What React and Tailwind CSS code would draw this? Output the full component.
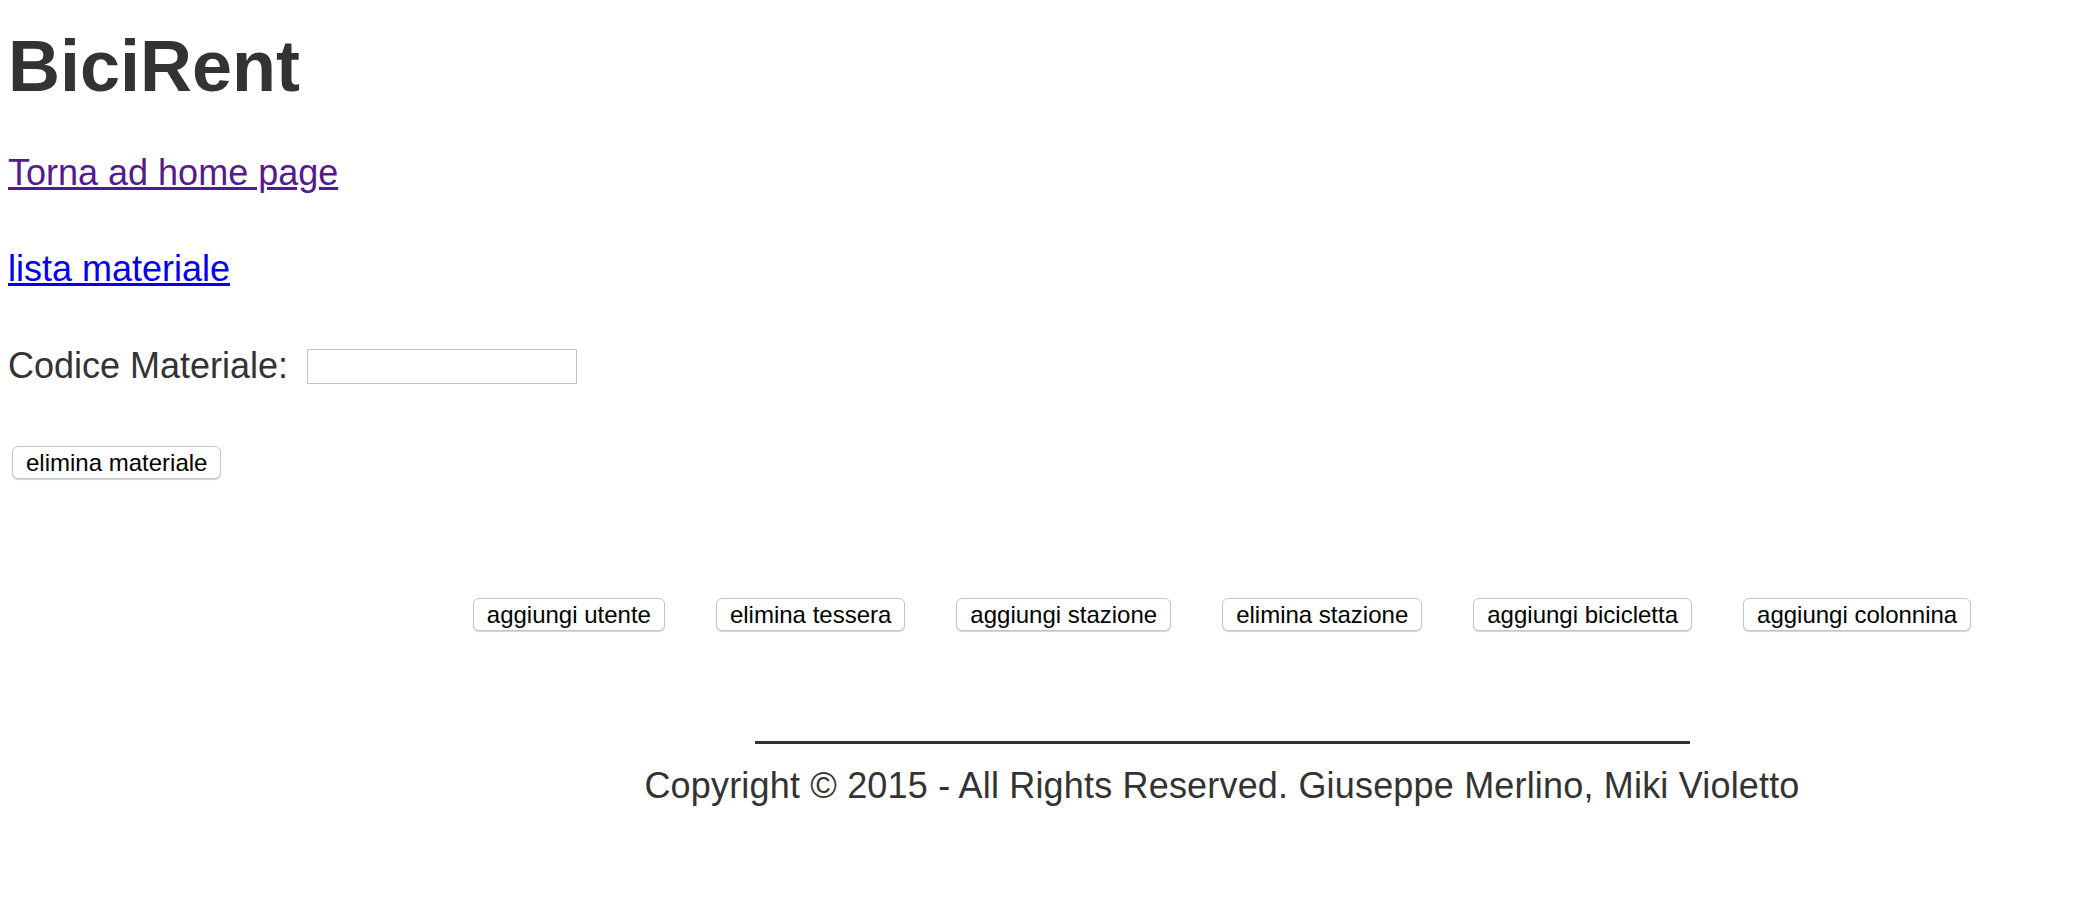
import React from 'react';

const buttons = [
  'aggiungi utente',
  'elimina tessera',
  'aggiungi stazione',
  'elimina stazione',
  'aggiungi bicicletta',
  'aggiungi colonnina',
];

const Btn = ({ children }) => (
  <button
    type="button"
    className="bg-white text-black text-[24px] leading-[27px] px-[13px] py-[2px] border border-[#c6c6c6] rounded-[6px] shadow-[0_1px_1px_rgba(0,0,0,0.18)] whitespace-nowrap"
  >
    {children}
  </button>
);

const App = () => {
  return (
    <div className="min-h-[910px] w-full bg-white font-['Liberation_Sans',Arial,sans-serif] text-[#333] pl-[8px]">
      {/* Header */}
      <h1 className="mt-[30px] text-[72px] leading-[72px] font-bold">BiciRent</h1>

      <div className="mt-[53px] text-[36px] leading-[36px]">
        <a href="#" className="text-[#551a8b] underline">Torna ad home page</a>
      </div>

      <div className="mt-[60px] text-[36px] leading-[36px]">
        <a href="#" className="text-[#0000ee] underline">lista materiale</a>
      </div>

      {/* Form */}
      <form onSubmit={(e) => e.preventDefault()}>
        <div className="mt-[61px] flex items-start">
          <label className="text-[36px] leading-[36px]">Codice Materiale:</label>
          <input
            type="text"
            name="codice"
            className="ml-[19px] mt-[1px] w-[270px] h-[35px] border border-[#c2c2c2] bg-white outline-none"
          />
        </div>
        <div className="mt-[62px] pl-[4px]">
          <Btn>elimina materiale</Btn>
        </div>
      </form>

      {/* Footer area */}
      <div className="ml-[336px] flex flex-col items-center">
        <div className="mt-[119px] flex gap-[51px]">
          {buttons.map((b) => (
            <Btn key={b}>{b}</Btn>
          ))}
        </div>
        <div className="mt-[110px] w-[935px] h-[3px] bg-[#333]" />
        <p className="mt-[24px] text-[36px] leading-[36px] tracking-[0.18px]">
          Copyright © 2015 - All Rights Reserved. Giuseppe Merlino, Miki Violetto
        </p>
      </div>
    </div>
  );
};

export default App;
